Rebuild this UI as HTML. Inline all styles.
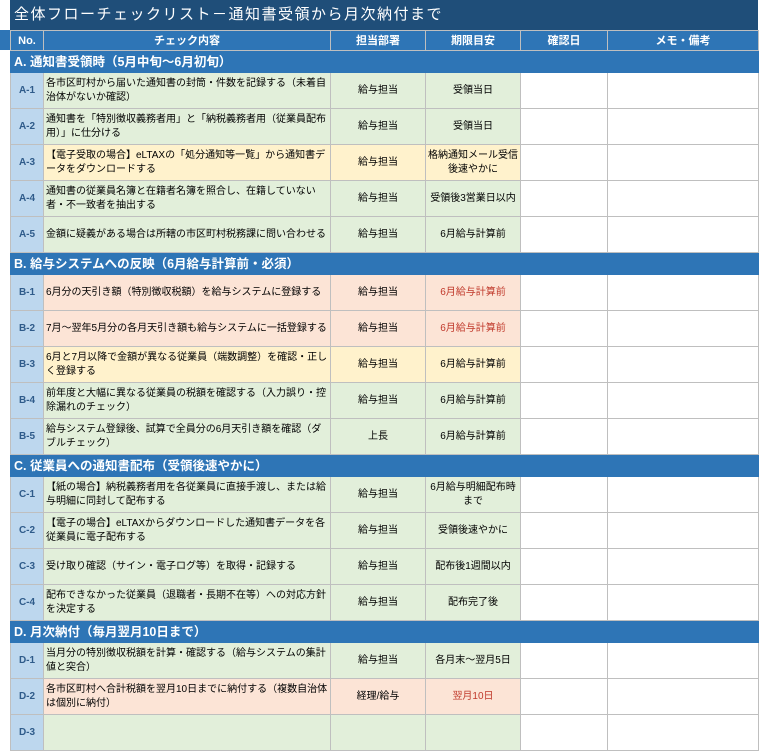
<!DOCTYPE html>
<html><head><meta charset="utf-8"><style>
body{margin:0;background:#fff;width:768px;height:720px;overflow:hidden;font-family:"Liberation Sans","Noto Sans CJK JP",sans-serif;position:relative}
.title{position:absolute;left:10px;top:0;width:748px;height:30px;background:#1f4e79;color:#fff;font-size:15px;line-height:30px;padding-left:4px;box-sizing:border-box;letter-spacing:1.5px}
.hb{position:absolute;left:0;top:30px;width:10px;height:20px;background:#2e75b6}
table{position:absolute;left:10px;top:30px;border-collapse:collapse;table-layout:fixed;width:748px}
td{border:1px solid #bfbfbf;font-size:10px;padding:0 2px;vertical-align:middle;line-height:14px;overflow:hidden}
tr.h td{background:#2e75b6;color:#fff;font-weight:bold;text-align:center;height:19px;font-size:11px}
tr.s td{background:#2e75b6;color:#fff;font-weight:bold;font-size:12.5px;height:21px;padding-left:3px;border-color:#2e75b6}
tr.r td{height:35px}
td.n{background:#bdd7ee;color:#2f5b8a;font-weight:bold;text-align:center}
td.c{text-align:center}
td.w{background:#fff}
.g td.x{background:#e2efda}.y td.x{background:#fff2cc}.p td.x{background:#fce4d6}
.red{color:#c0392b}
</style></head><body>
<div class="title">全体フローチェックリスト－通知書受領から月次納付まで</div>
<div class="hb"></div>
<table>
<col style="width:33px"><col style="width:287px"><col style="width:95px"><col style="width:95px"><col style="width:87px"><col style="width:151px">
<tr class="h"><td>No.</td><td>チェック内容</td><td>担当部署</td><td>期限目安</td><td>確認日</td><td>メモ・備考</td></tr>
<tr class="s"><td colspan="6">A. 通知書受領時（5月中旬～6月初旬）</td></tr>
<tr class="r g"><td class="n">A-1</td><td class="x">各市区町村から届いた通知書の封筒・件数を記録する（未着自治体がないか確認）</td><td class="x c">給与担当</td><td class="x c">受領当日</td><td class="w"></td><td class="w"></td></tr>
<tr class="r g"><td class="n">A-2</td><td class="x">通知書を「特別徴収義務者用」と「納税義務者用（従業員配布用）」に仕分ける</td><td class="x c">給与担当</td><td class="x c">受領当日</td><td class="w"></td><td class="w"></td></tr>
<tr class="r y"><td class="n">A-3</td><td class="x">【電子受取の場合】eLTAXの「処分通知等一覧」から通知書データをダウンロードする</td><td class="x c">給与担当</td><td class="x c">格納通知メール受信後速やかに</td><td class="w"></td><td class="w"></td></tr>
<tr class="r g"><td class="n">A-4</td><td class="x">通知書の従業員名簿と在籍者名簿を照合し、在籍していない者・不一致者を抽出する</td><td class="x c">給与担当</td><td class="x c">受領後3営業日以内</td><td class="w"></td><td class="w"></td></tr>
<tr class="r g"><td class="n">A-5</td><td class="x" style="white-space:nowrap">金額に疑義がある場合は所轄の市区町村税務課に問い合わせる</td><td class="x c">給与担当</td><td class="x c">6月給与計算前</td><td class="w"></td><td class="w"></td></tr>
<tr class="s"><td colspan="6">B. 給与システムへの反映（6月給与計算前・必須）</td></tr>
<tr class="r p"><td class="n">B-1</td><td class="x">6月分の天引き額（特別徴収税額）を給与システムに登録する</td><td class="x c">給与担当</td><td class="x c red">6月給与計算前</td><td class="w"></td><td class="w"></td></tr>
<tr class="r p"><td class="n">B-2</td><td class="x">7月～翌年5月分の各月天引き額も給与システムに一括登録する</td><td class="x c">給与担当</td><td class="x c red">6月給与計算前</td><td class="w"></td><td class="w"></td></tr>
<tr class="r y"><td class="n">B-3</td><td class="x">6月と7月以降で金額が異なる従業員（端数調整）を確認・正しく登録する</td><td class="x c">給与担当</td><td class="x c">6月給与計算前</td><td class="w"></td><td class="w"></td></tr>
<tr class="r g"><td class="n">B-4</td><td class="x">前年度と大幅に異なる従業員の税額を確認する（入力誤り・控除漏れのチェック）</td><td class="x c">給与担当</td><td class="x c">6月給与計算前</td><td class="w"></td><td class="w"></td></tr>
<tr class="r g"><td class="n">B-5</td><td class="x">給与システム登録後、試算で全員分の6月天引き額を確認（ダブルチェック）</td><td class="x c">上長</td><td class="x c">6月給与計算前</td><td class="w"></td><td class="w"></td></tr>
<tr class="s"><td colspan="6">C. 従業員への通知書配布（受領後速やかに）</td></tr>
<tr class="r g"><td class="n">C-1</td><td class="x">【紙の場合】納税義務者用を各従業員に直接手渡し、または給与明細に同封して配布する</td><td class="x c">給与担当</td><td class="x c">6月給与明細配布時まで</td><td class="w"></td><td class="w"></td></tr>
<tr class="r g"><td class="n">C-2</td><td class="x">【電子の場合】eLTAXからダウンロードした通知書データを各従業員に電子配布する</td><td class="x c">給与担当</td><td class="x c">受領後速やかに</td><td class="w"></td><td class="w"></td></tr>
<tr class="r g"><td class="n">C-3</td><td class="x">受け取り確認（サイン・電子ログ等）を取得・記録する</td><td class="x c">給与担当</td><td class="x c">配布後1週間以内</td><td class="w"></td><td class="w"></td></tr>
<tr class="r g"><td class="n">C-4</td><td class="x">配布できなかった従業員（退職者・長期不在等）への対応方針を決定する</td><td class="x c">給与担当</td><td class="x c">配布完了後</td><td class="w"></td><td class="w"></td></tr>
<tr class="s"><td colspan="6">D. 月次納付（毎月翌月10日まで）</td></tr>
<tr class="r g"><td class="n">D-1</td><td class="x">当月分の特別徴収税額を計算・確認する（給与システムの集計値と突合）</td><td class="x c">給与担当</td><td class="x c">各月末～翌月5日</td><td class="w"></td><td class="w"></td></tr>
<tr class="r p"><td class="n">D-2</td><td class="x">各市区町村へ合計税額を翌月10日までに納付する（複数自治体は個別に納付）</td><td class="x c">経理/給与</td><td class="x c red">翌月10日</td><td class="w"></td><td class="w"></td></tr>
<tr class="r g"><td class="n">D-3</td><td class="x"></td><td class="x c"></td><td class="x c"></td><td class="w"></td><td class="w"></td></tr>
</table>
</body></html>
